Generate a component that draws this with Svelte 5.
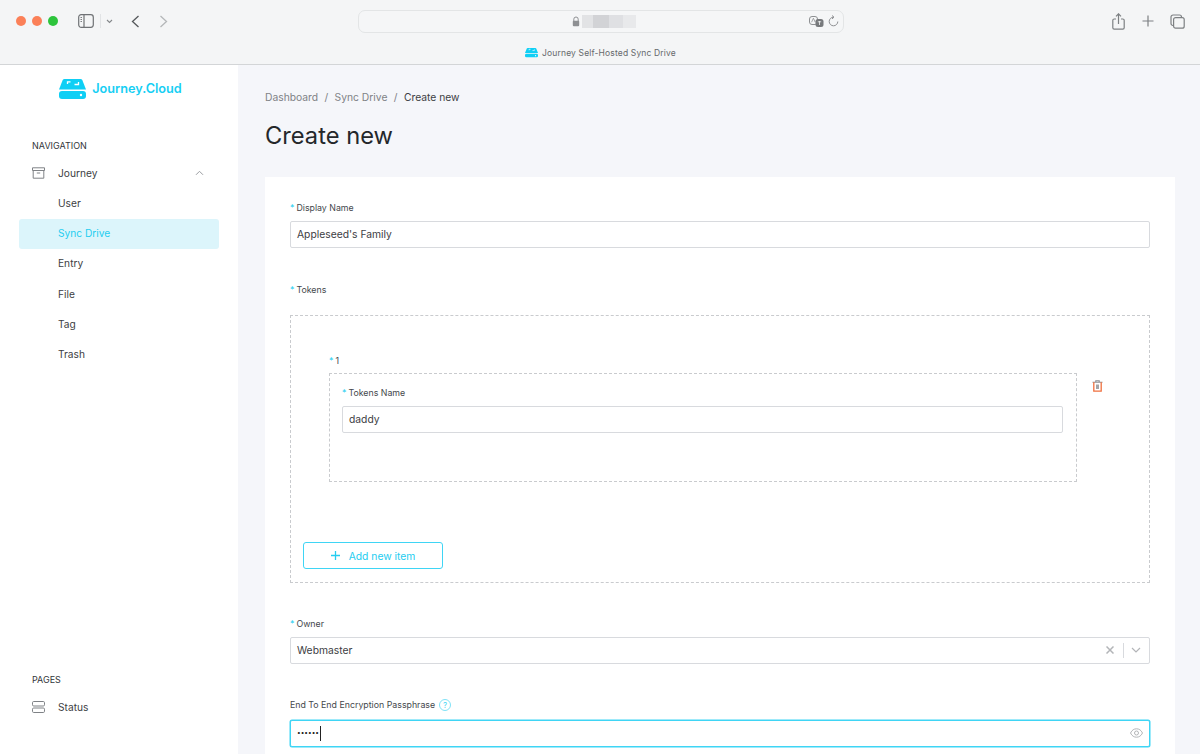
<script lang="ts">
  const subItems = ["User", "Sync Drive", "Entry", "File", "Tag", "Trash"];
  const active = "Sync Drive";
</script>

<div class="window">
  <!-- Browser chrome -->
  <header class="chrome">
    <div class="toolbar">
      <div class="lights">
        <span class="light orange"></span>
        <span class="light orange"></span>
        <span class="light green"></span>
      </div>
      <svg class="sidebar-toggle" width="16" height="14" viewBox="0 0 16 14" fill="none" stroke="#6f7275" stroke-width="1.2">
        <rect x="0.7" y="0.7" width="14.6" height="12.6" rx="2.5" />
        <path d="M6 1v12" />
        <path d="M2.5 3.5h1.5M2.5 5.5h1.5M2.5 7.5h1.5" stroke-width="0.9" />
      </svg>
      <span class="sep"></span>
      <svg class="caret" width="7" height="5" viewBox="0 0 7 5" fill="none" stroke="#85888b" stroke-width="1.1"><path d="M1 1l2.5 2.5L6 1" /></svg>
      <svg class="back" width="9" height="13" viewBox="0 0 9 13" fill="none" stroke="#55585b" stroke-width="1.3"><path d="M7.5 1L1.5 6.5l6 5.5" /></svg>
      <svg class="forward" width="9" height="13" viewBox="0 0 9 13" fill="none" stroke="#b4b7b9" stroke-width="1.3"><path d="M1.5 1l6 5.5-6 5.5" /></svg>

      <div class="address">
        <svg class="lock" width="8" height="11" viewBox="0 0 8 11"><path d="M1.8 5V3.2a2.2 2.2 0 0 1 4.4 0V5" fill="none" stroke="#8e9093" stroke-width="1" /><rect x="0.8" y="4.8" width="6.4" height="5.4" rx="1" fill="#8e9093" /></svg>
        <span class="blur-url"><i class="b1"></i><i class="b2"></i><i class="b3"></i><i class="b4"></i></span>
        <svg class="translate" width="15" height="11" viewBox="0 0 15 11">
          <rect x="0.5" y="0.5" width="8" height="8" rx="2.5" fill="none" stroke="#8e9093" />
          <path d="M2.600 6.200l1.800-4 1.800 4" fill="none" stroke="#8e9093" stroke-width="0.8" />
          <rect x="6.500" y="3" width="8" height="8" rx="2.500" fill="#77797c" />
          <path d="M8.800 5.800h3.400M10.500 5v4" fill="none" stroke="#f4f5f6" stroke-width="0.8" />
        </svg>
        <svg class="reload" width="11" height="12" viewBox="0 0 11 12" fill="none" stroke="#8e9093" stroke-width="1"><path d="M5.5 2.2a4.3 4.3 0 1 0 4.3 4.3" /><path d="M4 0.5l2 1.7-2 1.7" /></svg>
      </div>

      <div class="chrome-actions">
        <svg width="13" height="17" viewBox="0 0 13 17" fill="none" stroke="#7d8083" stroke-width="1.2">
          <path d="M4 6H2.200A1.400 1.400 0 0 0 .8 7.400v7.400a1.400 1.400 0 0 0 1.400 1.400h8.600a1.400 1.400 0 0 0 1.400-1.400V7.400A1.400 1.400 0 0 0 10.800 6H9" />
          <path d="M6.500 11V1M4 3.300L6.500 .8 9 3.300" />
        </svg>
        <svg width="12" height="12" viewBox="0 0 12 12" fill="none" stroke="#7d8083" stroke-width="1.200"><path d="M6 .5v11M.5 6h11" /></svg>
        <svg width="15" height="15" viewBox="0 0 15 15" fill="none" stroke="#7d8083" stroke-width="1.200">
          <path d="M3 11.500A2 2 0 0 1 1 9.500V3a2 2 0 0 1 2-2h6.500a2 2 0 0 1 2 2" />
          <rect x="3.600" y="3.600" width="10.600" height="10.600" rx="2" />
        </svg>
      </div>
    </div>
    <div class="tab">
      <svg width="13" height="11" viewBox="0 0 27 21"><use href="#drive" /></svg>
      <span>Journey Self-Hosted Sync Drive</span>
    </div>
  </header>

  <svg width="0" height="0" class="defs">
    <symbol id="drive" viewBox="0 0 27 21">
      <path d="M5.500 1h16c.8 0 1.400.4 1.800 1L27 11.500H0L3.700 2c.4-.6 1-1 1.800-1z" fill="#0fcff5" />
      <path d="M8.500 6V3.800h3M15.500 6.500h4V4" fill="none" stroke="#fff" stroke-width="1.300" />
      <rect x="0" y="13" width="27" height="8" rx="3" fill="#0fcff5" />
      <circle cx="22" cy="17" r="1.200" fill="#fff" />
    </symbol>
  </svg>

  <div class="body">
    <aside class="sidebar">
      <div class="brand">
        <svg width="27" height="21" viewBox="0 0 27 21"><use href="#drive" /></svg>
        <span>Journey.Cloud</span>
      </div>

      <div class="nav-title">NAVIGATION</div>
      <div class="nav-parent">
        <svg width="13" height="12" viewBox="0 0 13 12" fill="none" stroke="#7f8286" stroke-width="1">
          <path d="M.5.800h12v2.700H.5zM1.200 3.500v7.700h10.600V3.500M4.800 6h3.400" />
        </svg>
        <span class="nav-label">Journey</span>
        <svg class="chevron" width="9" height="6" viewBox="0 0 9 6" fill="none" stroke="#9a9da1" stroke-width="1"><path d="M1 4.800l3.500-3.500L8 4.800" /></svg>
      </div>
      <nav class="sub-nav">
        {#each subItems as item}
          <div class="sub-item" class:active={item === active}>{item}</div>
        {/each}
      </nav>

      <div class="pages">
        <div class="nav-title">PAGES</div>
        <div class="nav-parent">
          <svg width="13" height="12" viewBox="0 0 13 12" fill="none" stroke="#7f8286" stroke-width="1">
            <rect x=".5" y=".5" width="12" height="4.500" rx="1.200" />
            <rect x=".5" y="7" width="12" height="4.500" rx="1.200" />
          </svg>
          <span class="nav-label">Status</span>
        </div>
      </div>
    </aside>

    <main class="content">
      <div class="breadcrumb">
        <span>Dashboard</span><i>/</i><span>Sync Drive</span><i>/</i><b>Create new</b>
      </div>
      <h1>Create new</h1>

      <section class="card">
        <div class="field display-name">
          <div class="label"><em>*</em>Display Name</div>
          <div class="input">Appleseed's Family</div>
        </div>

        <div class="label tokens-label"><em>*</em>Tokens</div>
        <div class="tokens-box">
          <div class="label index-label"><em>*</em>1</div>
          <div class="token-row">
            <div class="token-box">
              <div class="label"><em>*</em>Tokens Name</div>
              <div class="input">daddy</div>
            </div>
            <svg class="trash" width="11" height="12" viewBox="0 0 11 12" fill="none" stroke="#f0703f" stroke-width="1.300">
              <path d="M.5 2.300h10M3.800 2.300V.8h3.400v1.500" stroke="#8d8f92" stroke-width="1.100" />
              <path d="M1.800 2.300v8.900h7.400V2.300" />
              <rect x="4" y="4.500" width="3" height="4.500" fill="#a3a5a8" stroke="none" />
            </svg>
          </div>
          <button class="add-btn" type="button">
            <svg width="9" height="9" viewBox="0 0 9 9" fill="none" stroke="#25cdf0" stroke-width="1.300"><path d="M4.500 0v9M0 4.500h9" /></svg>
            Add new item
          </button>
        </div>

        <div class="field owner">
          <div class="label"><em>*</em>Owner</div>
          <div class="input select">
            <span>Webmaster</span>
            <svg class="clear" width="8" height="8" viewBox="0 0 8 8" fill="none" stroke="#b3b5b8" stroke-width="1.500"><path d="M.5.500l7 7M7.500.500l-7 7" /></svg>
            <span class="select-sep"></span>
            <svg width="10" height="6" viewBox="0 0 10 6" fill="none" stroke="#b3b5b8" stroke-width="1.200"><path d="M1 1l4 4 4-4" /></svg>
          </div>
        </div>

        <div class="field passphrase">
          <div class="label plain">
            End To End Encryption Passphrase
            <span class="help">?</span>
          </div>
          <div class="input focused">
            <span class="dots">••••••</span><span class="cursor"></span>
            <svg class="eye" width="13" height="10" viewBox="0 0 13 10" fill="none" stroke="#b3b5b8" stroke-width="1">
              <path d="M.5 5C2 2 4 .8 6.500.8S11 2 12.500 5C11 8 9 9.200 6.500 9.200S2 8 .5 5z" />
              <circle cx="6.500" cy="5" r="2" />
            </svg>
          </div>
        </div>
      </section>
    </main>
  </div>
</div>

<style>
  :global(body) {
    margin: 0;
    overflow: hidden;
  }

  .window {
    width: 1200px;
    height: 754px;
    display: flex;
    flex-direction: column;
    overflow: hidden;
    font-family: "Inter", "Liberation Sans", sans-serif;
    color: #3d4043;
    background: #f5f6fa;
  }

  .defs {
    position: absolute;
  }

  /* browser chrome */
  .chrome {
    height: 64px;
    flex: none;
    background: #f4f5f6;
    border-bottom: 1px solid #d3d5d7;
  }

  .toolbar {
    height: 42px;
    display: flex;
    align-items: center;
  }

  .lights {
    display: flex;
    gap: 6px;
    margin-left: 16px;
  }

  .light {
    width: 10px;
    height: 10px;
    border-radius: 50%;
  }

  .orange {
    background: #fb8058;
  }

  .green {
    background: #2dc43c;
  }

  .sidebar-toggle {
    margin-left: 20px;
  }

  .sep {
    width: 1px;
    height: 14px;
    background: #e1e3e5;
    margin-left: 6px;
  }

  .caret {
    margin-left: 5px;
  }

  .back {
    margin-left: 18px;
  }

  .forward {
    margin-left: 19px;
  }

  .address {
    width: 484px;
    height: 21px;
    margin-left: 190px;
    border: 1px solid #e3e5e6;
    border-radius: 7px;
    display: flex;
    align-items: center;
    background: #f5f6f7;
  }

  .lock {
    margin-left: 213px;
  }

  .blur-url {
    display: flex;
    height: 13px;
    margin-left: 2px;
  }

  .blur-url i {
    display: block;
    height: 13px;
  }

  .b1 {
    width: 11px;
    background: #e2e3e5;
  }

  .b2 {
    width: 16px;
    background: #d2d3d6;
  }

  .b3 {
    width: 14px;
    background: #dfe0e3;
  }

  .b4 {
    width: 13px;
    background: #e8e9eb;
  }

  .translate {
    margin-left: auto;
  }

  .reload {
    margin-left: 4px;
    margin-right: 4px;
  }

  .chrome-actions {
    margin-left: auto;
    margin-right: 15px;
    display: flex;
    align-items: center;
    gap: 16.500px;
  }

  .tab {
    display: flex;
    align-items: center;
    justify-content: center;
    gap: 4px;
    font-size: 8.500px;
    color: #66696c;
    margin: 5px 0 0 1px;
    letter-spacing: 0.15px;
  }

  .body {
    flex: 1;
    display: flex;
    min-height: 0;
  }

  /* sidebar */
  .sidebar {
    width: 238px;
    flex: none;
    background: #fff;
    display: flex;
    flex-direction: column;
    box-sizing: border-box;
    padding: 13px 19px 0;
  }

  .brand {
    display: flex;
    align-items: center;
    justify-content: center;
    gap: 6px;
    margin-left: 3px;
    font-size: 12.700px;
    font-weight: 600;
    color: #17cff4;
  }

  .nav-title {
    font-size: 9px;
    color: #33363a;
    margin: 0 0 0 13px;
    line-height: 12px;
  }

  .brand + .nav-title {
    margin-top: 41px;
  }

  .nav-parent {
    display: flex;
    align-items: center;
    height: 30px;
    margin-left: 13px;
    margin-top: 6px;
  }

  .nav-label {
    font-size: 10.200px;
    margin-left: 13px;
  }

  .chevron {
    margin-left: auto;
    margin-right: 15px;
  }

  .sub-nav {
    display: flex;
    flex-direction: column;
    margin-top: 0.500px;
  }

  .sub-item {
    height: 30.400px;
    line-height: 29.500px;
    padding-left: 39px;
    font-size: 10.200px;
    border-radius: 3px;
  }

  .sub-item.active {
    background: #dcf5fb;
    color: #25cdf0;
  }

  .pages {
    margin-top: auto;
    padding-bottom: 32px;
  }

  .pages .nav-parent {
    margin-top: 6px;
  }

  /* main */
  .content {
    flex: 1;
    box-sizing: border-box;
    padding: 25px 25px 0 27px;
    min-width: 0;
  }

  .breadcrumb {
    display: flex;
    font-size: 10.300px;
    line-height: 14px;
    color: #7f8286;
  }

  .breadcrumb i {
    font-style: normal;
    margin: 0 6.400px;
  }

  .breadcrumb b {
    font-weight: 400;
    color: #3d4043;
  }

  h1 {
    margin: 17px 0 26px;
    font-size: 23.700px;
    line-height: 30px;
    font-weight: 400;
    color: #24272a;
  }

  .card {
    background: #fff;
    padding: 25px 25.500px 25px 25px;
    height: 640px;
    box-sizing: border-box;
  }

  .label {
    font-size: 8.800px;
    line-height: 12px;
    color: #45484c;
    display: flex;
    align-items: center;
  }

  .label em {
    font-style: normal;
    color: #25cdf0;
    margin-right: 2px;
  }

  .input {
    height: 27px;
    margin-top: 7px;
    box-sizing: border-box;
    border: 1px solid #d8dade;
    border-radius: 2px;
    padding: 0 6px 1px;
    display: flex;
    align-items: center;
    font-size: 10.300px;
    color: #3d4043;
    background: #fff;
  }

  .tokens-label {
    margin-top: 36px;
  }

  .tokens-box {
    margin-top: 19px;
    height: 268px;
    box-sizing: border-box;
    border: 1px dashed #c9cbce;
    padding: 39px 12px 0;
    display: flex;
    flex-direction: column;
  }

  .index-label {
    margin-left: 26px;
  }

  .token-row {
    display: flex;
    margin: 6px 0 0 26px;
  }

  .token-box {
    width: 748px;
    height: 109px;
    box-sizing: border-box;
    border: 1px dashed #c9cbce;
    padding: 13px 13px 0 12px;
  }

  .trash {
    margin: 7px 0 0 15px;
  }

  .add-btn {
    width: 140px;
    height: 27px;
    margin-top: 60px;
    border: 1px solid #3fd5f5;
    border-radius: 3px;
    background: #fff;
    color: #25cdf0;
    font: inherit;
    font-size: 10.300px;
    display: flex;
    align-items: center;
    justify-content: center;
    gap: 9px;
    padding: 0;
  }

  .owner {
    margin-top: 35px;
  }

  .select svg {
    flex: none;
  }

  .clear {
    margin-left: auto;
  }

  .select-sep {
    width: 1px;
    height: 15px;
    background: #d8dade;
    margin: 0 7px 0 9px;
  }

  .select {
    padding-right: 8px;
  }

  .passphrase {
    margin-top: 35px;
  }

  .passphrase .input {
    margin-top: 9px;
  }

  .plain {
    gap: 4px;
  }

  .help {
    width: 10px;
    height: 10px;
    border: 1px solid #7fe2f7;
    border-radius: 50%;
    font-size: 8px;
    line-height: 10px;
    text-align: center;
    color: #48d6f5;
  }

  .focused {
    border-color: #3fd5f5;
    box-shadow: 0 0 0 0.5px #3fd5f5;
    padding-right: 6px;
  }

  .dots {
    font-size: 6.500px;
    color: #222;
  }

  .cursor {
    width: 1.500px;
    height: 15px;
    background: #222;
    margin-left: 1px;
  }

  .eye {
    margin-left: auto;
  }
</style>
